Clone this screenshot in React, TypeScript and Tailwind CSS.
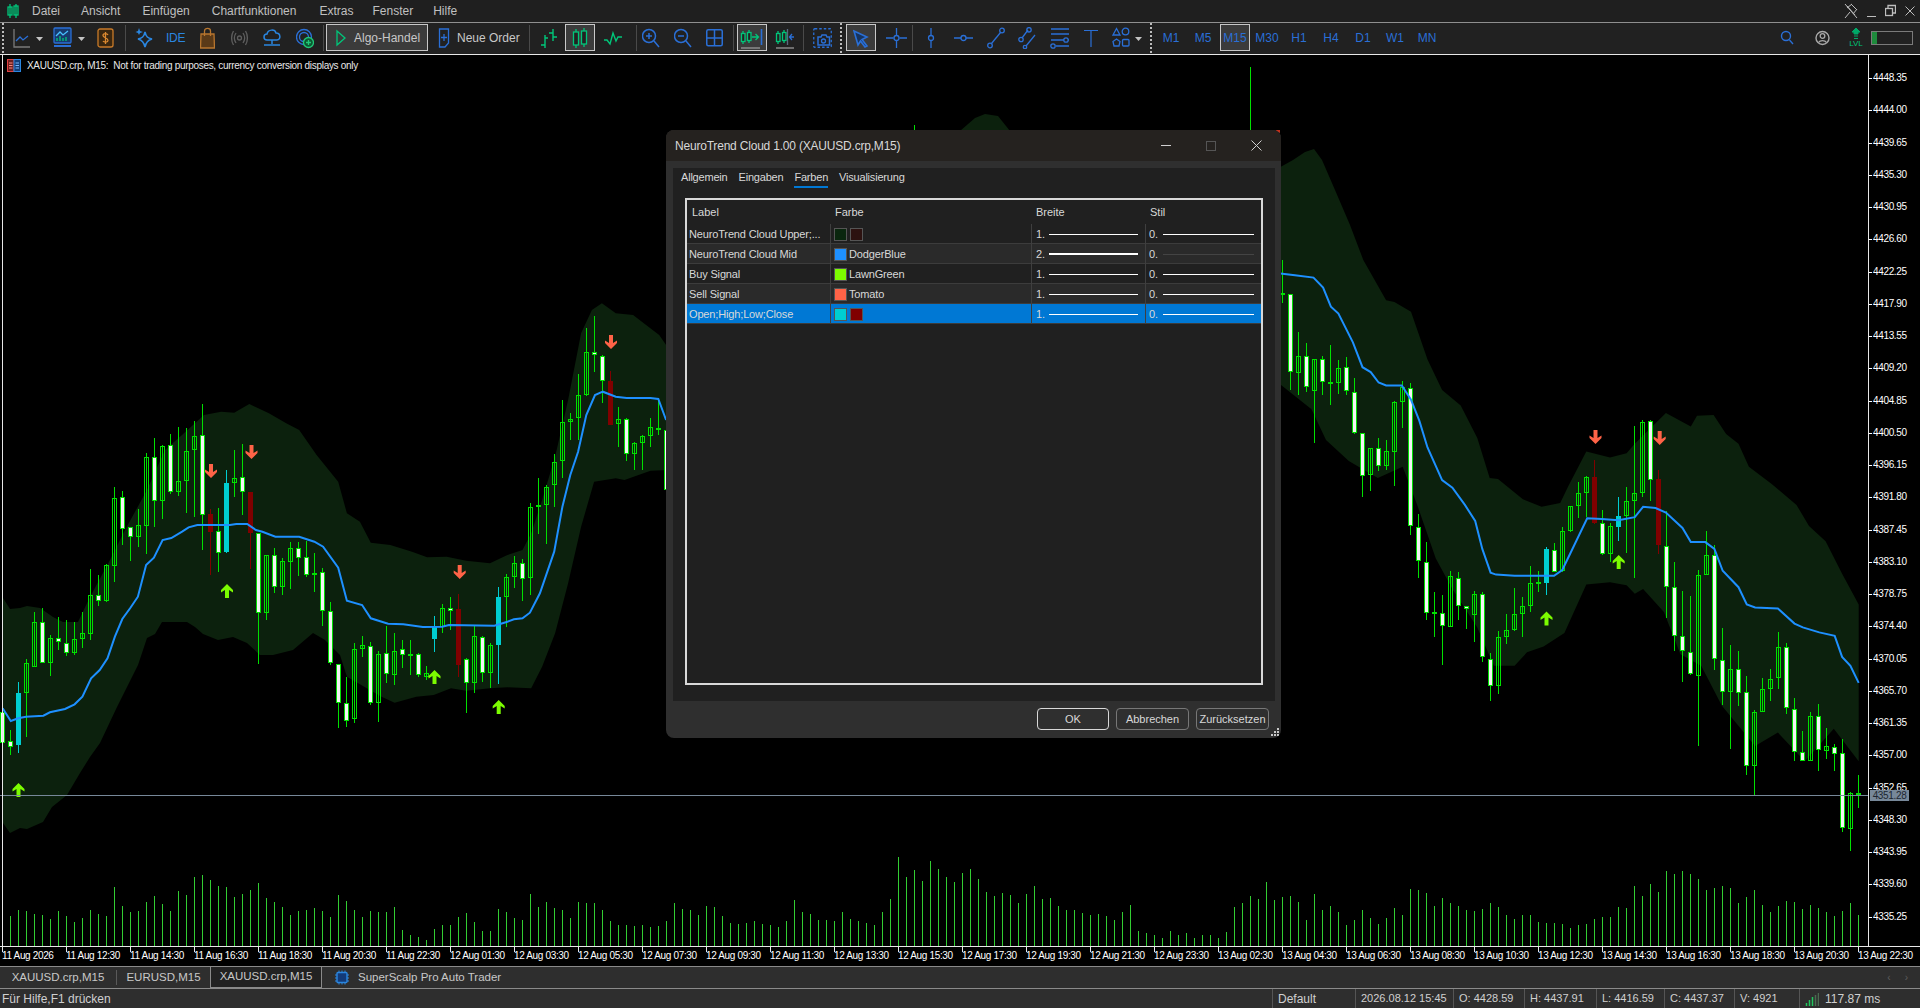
import type { ReactNode } from "react";

type Kind = "w" | "o" | "c" | "r";
type Candle = [number, number, number, number, number, Kind];

// [X, high, bodyTop, bodyBottom, low, kind], read off the left crop
const leftCandles: Candle[] = [
  [6, 1235, 1235, 1330, 1330, "w"], [24, 1290, 1322, 1342, 1365, "w"], [42, 1145, 1180, 1335, 1360, "c"],
  [61, 1078, 1090, 1180, 1310, "o"], [80, 937, 965, 1100, 1100, "o"], [98, 925, 965, 1090, 1090, "w"],
  [116, 1005, 1015, 1090, 1128, "o"], [135, 950, 1015, 1027, 1050, "w"], [153, 960, 1030, 1060, 1068, "w"],
  [172, 965, 1018, 1060, 1065, "o"], [190, 937, 1000, 1018, 1045, "o"], [209, 808, 885, 1003, 1020, "o"],
  [227, 825, 885, 902, 918, "w"], [245, 792, 795, 903, 905, "o"], [264, 560, 595, 797, 845, "o"],
  [282, 573, 590, 688, 735, "w"], [301, 680, 680, 710, 783, "w"], [319, 628, 675, 712, 740, "o"],
  [338, 460, 472, 677, 762, "o"], [356, 415, 472, 602, 680, "w"], [375, 435, 438, 602, 657, "o"],
  [393, 402, 436, 575, 582, "w"], [411, 380, 542, 575, 587, "o"], [430, 385, 452, 542, 640, "o"],
  [448, 362, 408, 450, 650, "o"], [467, 312, 406, 644, 750, "w"], [485, 628, 642, 695, 825, "r"],
  [504, 625, 694, 760, 815, "w"], [522, 510, 550, 755, 760, "c"], [541, 450, 535, 550, 590, "o"],
  [559, 432, 532, 577, 645, "w"], [577, 576, 576, 700, 808, "r"], [596, 700, 700, 940, 1092, "w"],
  [614, 766, 766, 940, 960, "o"], [633, 745, 766, 862, 880, "w"], [651, 775, 784, 862, 885, "o"],
  [670, 725, 745, 785, 868, "o"], [688, 725, 745, 775, 828, "w"], [707, 722, 772, 826, 830, "w"],
  [725, 760, 818, 823, 875, "o"], [743, 805, 817, 932, 977, "w"], [762, 905, 932, 1090, 1095, "w"],
  [780, 1093, 1093, 1210, 1285, "w"], [799, 1132, 1210, 1264, 1282, "w"], [817, 1030, 1048, 1258, 1268, "o"],
  [836, 1008, 1036, 1048, 1070, "o"], [854, 1025, 1037, 1210, 1215, "w"], [873, 1052, 1062, 1210, 1265, "o"],
  [891, 978, 1060, 1122, 1150, "w"], [909, 998, 1054, 1124, 1155, "o"], [928, 1020, 1048, 1064, 1104, "w"],
  [946, 1020, 1062, 1067, 1125, "o"], [965, 1060, 1063, 1125, 1130, "w"], [983, 1098, 1118, 1130, 1140, "o"],
  [1002, 948, 980, 1018, 1055, "c"], [1020, 912, 925, 980, 1000, "o"], [1039, 890, 925, 932, 990, "w"],
  [1057, 882, 928, 1095, 1130, "r"], [1076, 1075, 1078, 1148, 1240, "w"], [1094, 975, 1008, 1148, 1180, "o"],
  [1112, 1008, 1010, 1118, 1145, "w"], [1131, 1028, 1036, 1118, 1165, "o"], [1149, 860, 892, 1036, 1152, "c"],
  [1168, 822, 832, 892, 980, "o"], [1187, 768, 788, 832, 864, "o"], [1205, 778, 788, 838, 902, "w"],
  [1223, 610, 620, 835, 885, "o"], [1242, 535, 616, 620, 702, "o"], [1260, 555, 560, 616, 732, "o"],
  [1278, 462, 485, 556, 620, "o"], [1297, 300, 367, 482, 535, "o"], [1315, 340, 356, 367, 420, "o"],
  [1334, 222, 284, 355, 420, "o"], [1352, 85, 155, 285, 288, "o"], [1371, 48, 155, 166, 216, "w"],
  [1389, 165, 167, 244, 310, "w"], [1408, 212, 244, 375, 375, "r"], [1426, 322, 356, 373, 440, "o"],
  [1445, 355, 356, 462, 483, "w"], [1463, 425, 428, 463, 510, "o"], [1482, 405, 407, 428, 510, "o"],
  [1500, 355, 382, 407, 440, "o"], [1518, 300, 385, 389, 405, "o"], [1536, 390, 390, 570, 570, "w"],
];

// same thing for the right crop, other scale
const rightCandles: Candle[] = [
  [30, 0, 85, 88, 113, "o"], [49, 88, 88, 293, 340, "w"], [69, 187, 252, 294, 352, "o"], [88, 218, 250, 333, 344, "w"],
  [107, 258, 258, 342, 477, "o"], [127, 250, 258, 320, 352, "w"], [146, 222, 320, 323, 378, "o"], [165, 262, 281, 322, 350, "o"],
  [185, 254, 279, 343, 352, "w"], [204, 308, 344, 453, 455, "w"], [223, 453, 453, 565, 618, "w"], [242, 492, 492, 562, 603, "o"],
  [262, 465, 492, 538, 552, "w"], [281, 470, 500, 537, 550, "o"], [300, 368, 372, 502, 590, "o"], [320, 316, 333, 372, 440, "o"],
  [339, 322, 334, 696, 718, "w"], [358, 665, 697, 787, 832, "w"], [378, 738, 788, 923, 940, "w"], [397, 868, 921, 924, 985, "o"],
  [416, 875, 922, 957, 1057, "w"], [435, 813, 827, 958, 960, "o"], [455, 815, 830, 905, 940, "w"], [474, 905, 905, 913, 965, "w"],
  [493, 866, 873, 927, 997, "o"], [513, 868, 872, 1037, 1050, "w"], [532, 1028, 1042, 1114, 1153, "w"], [551, 970, 984, 1114, 1135, "o"],
  [570, 925, 968, 986, 1003, "o"], [590, 858, 924, 968, 970, "o"], [609, 880, 903, 924, 985, "o"], [628, 800, 845, 905, 920, "o"],
  [648, 812, 842, 845, 868, "o"], [667, 750, 756, 843, 875, "c"], [686, 740, 757, 814, 816, "w"], [705, 697, 708, 813, 815, "o"],
  [725, 642, 642, 707, 710, "o"], [744, 580, 610, 642, 675, "o"], [763, 564, 568, 610, 672, "o"], [783, 522, 568, 688, 690, "r"],
  [802, 654, 686, 767, 772, "w"], [821, 688, 695, 767, 790, "o"], [841, 618, 670, 697, 735, "c"], [860, 592, 631, 670, 765, "o"],
  [879, 435, 610, 631, 832, "o"], [899, 418, 422, 610, 618, "o"], [918, 418, 420, 576, 630, "w"], [937, 550, 572, 745, 768, "r"],
  [957, 655, 747, 854, 935, "w"], [976, 790, 854, 983, 1022, "w"], [995, 865, 982, 1022, 1103, "w"], [1014, 878, 1023, 1083, 1085, "w"],
  [1034, 810, 822, 1086, 1270, "o"], [1053, 708, 772, 822, 822, "o"], [1072, 745, 770, 1043, 1072, "w"], [1092, 962, 1045, 1130, 1162, "w"],
  [1111, 1006, 1070, 1130, 1278, "o"], [1130, 1022, 1070, 1132, 1165, "w"], [1150, 1088, 1130, 1323, 1347, "w"], [1169, 1175, 1182, 1322, 1400, "o"],
  [1188, 1092, 1120, 1180, 1182, "o"], [1207, 1070, 1094, 1122, 1152, "o"], [1227, 972, 1010, 1093, 1122, "o"], [1246, 1002, 1010, 1170, 1185, "w"],
  [1265, 1145, 1172, 1285, 1310, "w"], [1285, 1232, 1285, 1308, 1310, "w"], [1304, 1180, 1192, 1308, 1310, "o"], [1323, 1160, 1192, 1280, 1335, "w"],
  [1342, 1222, 1271, 1282, 1305, "o"], [1362, 1265, 1272, 1290, 1335, "w"], [1381, 1252, 1288, 1485, 1495, "w"], [1400, 1390, 1392, 1488, 1545, "o"],
  [1420, 1345, 1392, 1398, 1432, "w"],
];

const volLeft = [183,165,168,177,180,192,168,183,201,189,165,177,183,96,153,171,168,141,123,147,168,108,120,66,60,75,93,96,126,117,105,84,129,141,156,180,168,165,159,168,186,120,138,165,186,168,171,171,156,225,240,246,255,222,210,210,186,174,201,228,228,162,171,189,195,117,156,141,159,165,189,141,144,144,165,198,210,210,212,210,216,213,198,144,162,165,180,153,156,183,204,207,204,198,207,210,216,198,135,171,177,195,195,198,171,192,198,204,210,171,132,6,66,45,78,18,42,66,81];
const volRight = [54,42,72,111,123,114,120,144,117,93,132,129,153,165,165,174,180,177,183,195,171,150,228,234,240,249,228,240,234,249,240,240,249,231,156,144,123,132,81,135,126,123,141,195,117,165,153,171,210,195,165,189,207,189,159,180,102,105,114,153,129,144,153,165,168,162,144,156,180,192,180,180,201,204,204,207,219,210,207,192,186,186,156,159,93,123,87,111,48,57,48,57,72,105,99,93,99,144,126,105,150,171,153,138,141,162,150,159,171,183,168,144,180];

type P = [number, number];
const zl = ([x, y]: P): P => [x / 2.306, 300 + y / 3];
const zr = ([x, y]: P): P => [1270 + x / 2.412, 260 + y / 2.613];
const pts = (list: P[]) => list.map(([x, y]) => `${x.toFixed(1)},${y.toFixed(1)}`).join(" ");

const leftCloudTop: P[] = [[3, 598], [10, 609], [20, 608], [27, 606], [40, 608], [53, 617], [63, 622], [78, 622], [90, 597], [110, 560], [125, 530], [147, 490], [165, 450], [182, 435], [204, 415],
  ...([[510, 335], [540, 338], [575, 312], [620, 340], [660, 370], [690, 390], [730, 465], [780, 545], [800, 640], [830, 665], [855, 728], [900, 735], [950, 755], [985, 772], [1030, 770], [1075, 782], [1130, 790], [1170, 765], [1205, 750], [1225, 700], [1250, 600], [1280, 470], [1310, 300], [1340, 100], [1365, 30], [1388, 10], [1420, 40], [1460, 45], [1490, 75], [1520, 105], [1536, 135], [1540, 140]] as P[]).map(zl)];
const leftCloudBottom: P[] = [[3, 823], [10, 833], [20, 828], [27, 829], [43, 822], [52, 807], [67, 795], [80, 773], [90, 757], [100, 743], [117, 707], [138, 665], [147, 638], [155, 634], [162, 622], [187, 622], [195, 627], [203, 634], [218, 640], [233, 637], [247, 643], [260, 655], [273, 655], [293, 650], [313, 633], [325, 640], [340, 655],
  ...([[800, 1130], [880, 1190], [910, 1208], [960, 1190], [1000, 1185], [1040, 1165], [1075, 1172], [1130, 1165], [1170, 1162], [1225, 1165], [1250, 1100], [1280, 1000], [1310, 850], [1340, 680], [1370, 545], [1420, 535], [1440, 540], [1500, 512], [1540, 510]] as P[]).map(zl)];

const rightCloudTop: P[] = [[1275, 170], [1293, 160], [1305, 152], [1314, 149], [1322, 160], [1335, 190], [1350, 225],
  ...([[225, 0], [280, 105], [300, 110], [340, 135], [380, 260], [415, 340], [460, 380], [500, 465], [530, 570], [550, 572], [610, 625], [655, 645], [700, 635], [720, 590], [763, 500], [820, 516], [860, 505], [880, 480], [955, 400], [1015, 435], [1030, 407], [1070, 405], [1100, 455], [1130, 480], [1155, 540], [1210, 585], [1270, 640], [1300, 695], [1340, 735], [1380, 820], [1420, 900]] as P[]).map(zr)];
const rightCloudBottom: P[] = ([[0, 310], [25, 325], [100, 390], [135, 470], [190, 525], [260, 570], [320, 540], [355, 640], [400, 780], [440, 860], [500, 960], [540, 1060], [590, 1060], [620, 1025], [660, 1010], [710, 975], [763, 848], [820, 842], [860, 850], [880, 872], [900, 860], [950, 920], [990, 1030], [1040, 1060], [1090, 1165], [1170, 1270], [1225, 1235], [1290, 1310], [1360, 1225], [1420, 1310]] as P[]).map(zr);

const blueLeft: P[] = ([[6, 1225], [25, 1263], [42, 1255], [60, 1250], [100, 1247], [115, 1237], [150, 1227], [172, 1213], [190, 1190], [210, 1135], [230, 1110], [248, 1075], [265, 1010], [282, 957], [300, 925], [318, 890], [337, 795], [355, 773], [375, 720], [395, 714], [420, 695], [435, 682], [455, 675], [530, 675], [545, 672], [570, 672], [590, 690], [605, 695], [635, 710], [690, 710], [725, 725], [745, 740], [780, 803], [800, 902], [835, 915], [855, 955], [895, 971], [930, 973], [975, 981], [1020, 980], [1035, 975], [1140, 977], [1170, 965], [1185, 958], [1205, 955], [1222, 938], [1245, 880], [1278, 755], [1297, 620], [1315, 525], [1333, 455], [1352, 345], [1372, 285], [1390, 275], [1420, 290], [1445, 294], [1500, 294], [1518, 297], [1536, 360]] as P[]).map(zl);
const blueRight: P[] = ([[25, 35], [60, 40], [105, 46], [128, 72], [147, 122], [165, 140], [200, 215], [223, 280], [243, 293], [262, 320], [280, 328], [318, 328], [340, 365], [360, 420], [380, 490], [415, 575], [440, 595], [470, 640], [495, 682], [512, 755], [532, 817], [545, 822], [590, 825], [685, 825], [705, 810], [725, 765], [765, 675], [800, 677], [840, 680], [880, 672], [900, 645], [930, 648], [955, 660], [995, 700], [1015, 737], [1050, 737], [1072, 755], [1092, 812], [1130, 855], [1150, 900], [1170, 908], [1225, 911], [1265, 950], [1285, 960], [1325, 973], [1362, 982], [1380, 1037], [1400, 1060], [1420, 1105]] as P[]).map(zr);

const downArrows: P[] = [[211, 471], [251.5, 452], [459.7, 572], [611, 342], [1595.5, 437], [1659.7, 438]];
const upArrows: P[] = [[227, 591], [434.5, 677], [498.7, 707], [18.5, 790], [1546.5, 618.6], [1618.7, 562]];

const CANDLE = "#00e000";

function CandleMark({ cx, hi, top, bot, lo, kind }: { cx: number; hi: number; top: number; bot: number; lo: number; kind: Kind }) {
  const y1 = Math.round(hi);
  const y2 = Math.round(lo);
  const t = Math.round(top);
  const b = Math.max(Math.round(bot), t + 2);
  const solid = kind === "c" ? "#00ced1" : kind === "r" ? "#800000" : null;
  return (
    <g shapeRendering="crispEdges">
      <line x1={cx} x2={cx} y1={y1} y2={y2} stroke={solid ?? CANDLE} />
      {solid ? (
        <rect x={cx - 2.5} y={t} width={5} height={b - t} fill={solid} />
      ) : (
        <rect x={cx - 2} y={t + 0.5} width={4} height={b - t - 1} fill={kind === "w" ? "#f4f4f4" : "none"} stroke={CANDLE} />
      )}
    </g>
  );
}

function ChartDrawing() {
  return (
    <svg className="block shrink-0" width={1868} height={891} viewBox="0 55 1868 891">
      <rect x={0} y={55} width={1868} height={891} fill="#000" />
      <polygon points={pts([...leftCloudTop, ...[...leftCloudBottom].reverse()])} fill="#0c210d" />
      <polygon points={pts([...rightCloudTop, ...[...rightCloudBottom].reverse()])} fill="#0c210d" />
      <polygon points="960,131 975,118 985,114 998,116 1010,131" fill="#0c210d" />
      <line x1={914.5} x2={914.5} y1={125} y2={131} stroke={CANDLE} shapeRendering="crispEdges" />
      <line x1={1250.5} x2={1250.5} y1={67} y2={131} stroke={CANDLE} shapeRendering="crispEdges" />
      <rect x={1276} y={130} width={4} height={3} fill="#c0301c" />

      <g stroke="#32cd32" shapeRendering="crispEdges">
        {volLeft.map((v, i) => (
          <line key={i} x1={10.5 + 8 * i} x2={10.5 + 8 * i} y1={Math.round(855 + v / 3)} y2={946} />
        ))}
        {volRight.map((v, i) => (
          <line key={i} x1={962.5 + 8 * i} x2={962.5 + 8 * i} y1={Math.round(855 + v / 3)} y2={946} />
        ))}
      </g>

      {leftCandles.map(([X, h, t, b, l, k]) => {
        const [x] = zl([X, 0]);
        const cx = Math.round((x - 2.5) / 8) * 8 + 2.5;
        return <CandleMark key={X} cx={cx} hi={300 + h / 3} top={300 + t / 3} bot={300 + b / 3} lo={300 + l / 3} kind={k} />;
      })}
      {rightCandles.map(([X, h, t, b, l, k]) => {
        const [x] = zr([X, 0]);
        const cx = Math.round((x - 2.5) / 8) * 8 + 2.5;
        return <CandleMark key={X} cx={cx} hi={260 + h / 2.613} top={260 + t / 2.613} bot={260 + b / 2.613} lo={260 + l / 2.613} kind={k} />;
      })}

      <polyline points={pts(blueLeft)} fill="none" stroke="#1e90ff" strokeWidth={2} />
      <polyline points={pts(blueRight)} fill="none" stroke="#1e90ff" strokeWidth={2} />

      {upArrows.map(([x, y]) => (
        <path key={x} transform={`translate(${x} ${y})`} d="M0 -7 L6 -1 L6 1.5 L2 -1 L2 7 L-2 7 L-2 -1 L-6 1.5 L-6 -1 Z" fill="#7cfc00" />
      ))}
      {downArrows.map(([x, y]) => (
        <path key={x} transform={`translate(${x} ${y})`} d="M0 7 L6 1 L6 -1.5 L2 1 L2 -7 L-2 -7 L-2 1 L-6 -1.5 L-6 1 Z" fill="#ff6347" />
      ))}

      <line x1={0} x2={1868} y1={795.5} y2={795.5} stroke="#778899" shapeRendering="crispEdges" />
      <rect x={2} y={55} width={1} height={891} fill="#e8e8e8" shapeRendering="crispEdges" />
    </svg>
  );
}

const prices = ["4448.35","4444.00","4439.65","4435.30","4430.95","4426.60","4422.25","4417.90","4413.55","4409.20","4404.85","4400.50","4396.15","4391.80","4387.45","4383.10","4378.75","4374.40","4370.05","4365.70","4361.35","4357.00","4352.65","4348.30","4343.95","4339.60","4335.25"];

const times = ["11 Aug 2026","11 Aug 12:30","11 Aug 14:30","11 Aug 16:30","11 Aug 18:30","11 Aug 20:30","11 Aug 22:30","12 Aug 01:30","12 Aug 03:30","12 Aug 05:30","12 Aug 07:30","12 Aug 09:30","12 Aug 11:30","12 Aug 13:30","12 Aug 15:30","12 Aug 17:30","12 Aug 19:30","12 Aug 21:30","12 Aug 23:30","13 Aug 02:30","13 Aug 04:30","13 Aug 06:30","13 Aug 08:30","13 Aug 10:30","13 Aug 12:30","13 Aug 14:30","13 Aug 16:30","13 Aug 18:30","13 Aug 20:30","13 Aug 22:30"];

function PriceAxis() {
  return (
    <div className="relative w-[52px] shrink-0 border-l border-[#e8e8e8] bg-black pt-[18px] text-[10px] leading-none tracking-[-0.35px] text-white">
      {prices.map((p) => (
        <div key={p} className="flex h-[32.25px] items-start">
          <span className="mt-[5px] h-px w-[3px] bg-white" />
          <span className="ml-[1px]">{p}</span>
        </div>
      ))}
      <div className="absolute left-[1px] top-[735px] flex h-[11px] w-[39px] items-center justify-center bg-[#778899] text-[10px] text-[#1c2630]">4351.28</div>
    </div>
  );
}

function TimeAxis() {
  return (
    <div className="flex h-[20px] shrink-0 items-start border-t border-[#e8e8e8] bg-black pl-[2px] text-[10px] leading-none tracking-[-0.35px] whitespace-nowrap text-white">
      {times.map((t, i) => (
        <div key={i} className="h-[5px] w-[64px] shrink-0 border-l border-[#e8e8e8]">
          <span className="relative top-[4px] -left-px block">{t}</span>
        </div>
      ))}
    </div>
  );
}

/* toolbar icons */
const BLUE = "#2a6fd6";
const GREEN = "#00c67a";

function Ico({ className, w, h = 22, children }: { className: string; w: number; h?: number; children: ReactNode }) {
  return (
    <svg className={`shrink-0 ${className}`} width={w} height={h} viewBox={`0 0 ${w} ${h}`} fill="none" strokeWidth={1.3}>
      {children}
    </svg>
  );
}

const Sep = ({ className }: { className: string }) => <span className={`h-[26px] w-px shrink-0 bg-[#4a4a4a] ${className}`} />;
const Grip = ({ className }: { className: string }) => (
  <span className={`h-[30px] w-[2px] shrink-0 border-l-2 border-dotted border-[#bdbdbd] ${className}`} />
);
const Caret = ({ className }: { className: string }) => (
  <Ico className={className} w={7} h={22}>
    <path d="M0 10 H7 L3.5 14 Z" fill="#c4c4c4" />
  </Ico>
);

function Selected({ className = "", children }: { className?: string; children: ReactNode }) {
  return (
    <div className={`flex h-[27px] w-[30px] shrink-0 items-center justify-center border border-[#c8c8c8] bg-[#3b3b3b] ${className}`}>{children}</div>
  );
}

function PeriodBtn({ label, active }: { label: string; active?: boolean }) {
  return (
    <div className={`flex h-[27px] w-[30px] shrink-0 items-center justify-center text-[12px] text-[#2a6fd6] ${active ? "border border-[#c8c8c8] bg-[#3b3b3b]" : ""}`}>
      {label}
    </div>
  );
}

function Toolbar() {
  return (
    <div className="flex h-[31px] shrink-0 items-center bg-[#212121] pb-[2px]">
      <Grip className="ml-[2px]" />
      <Ico className="ml-[9px]" w={17}>
        <path d="M1 2 V20 H17" stroke="#7a7a7a" />
        <path d="M3 14 L7 10 L10 13 L15 9" stroke={BLUE} />
      </Ico>
      <Caret className="ml-[6px]" />
      <Ico className="ml-[10px]" w={19}>
        <rect x="1" y="1" width="17" height="15" rx="1" stroke={BLUE} fill="#173a6e" />
        <path d="M3 9 L7 5 L10 8 L15 4" stroke="#49c0ff" />
        <path d="M4 14 V11 M7 14 V9 M10 14 V11 M13 14 V10" stroke={GREEN} />
        <path d="M1 19 H18" stroke={BLUE} strokeWidth="2" />
      </Ico>
      <Caret className="ml-[6px]" />
      <Ico className="ml-[12px]" w={17}>
        <rect x="1" y="2" width="15" height="18" rx="2" stroke="#c87a28" fill="#3a2710" />
        <path d="M11 8 C10 6 6 6 6 8.500 C6 11 11 10.500 11 13.500 C11 15.500 7 15.500 6 14 M8.500 5 V17" stroke="#dd8a30" />
      </Ico>
      <Sep className="ml-[11px]" />
      <Ico className="ml-[9px]" w={18}>
        <path d="M10 5 C11 10 13 11 17 12 C13 13 11 15 10 20 C9 15 7 13 3 12 C7 11 9 10 10 5 Z" stroke="#2a86e0" strokeWidth="1.6" />
        <path d="M4 1 L5 4 L8 5 L5 6 L4 8 L3 6 L0.500 5 L3 4 Z" fill="#2a86e0" />
      </Ico>
      <span className="ml-[13px] w-[18px] shrink-0 text-[12px] tracking-[-0.3px] text-[#2a86e0]">IDE</span>
      <Ico className="ml-[16px]" w={15}>
        <path d="M1 7 H14 L14.500 21 H0.500 Z" stroke="#b8762e" fill="#5a3a18" />
        <path d="M4.500 9 V4 C4.500 0.500 10.500 0.500 10.500 4 V9" stroke="#b8762e" />
      </Ico>
      <Ico className="ml-[16px]" w={17}>
        <circle cx="8.500" cy="11" r="2" stroke="#5e5e5e" />
        <path d="M5 6 C3 9 3 13 5 16 M12 6 C14 9 14 13 12 16 M2.500 4 C0 8 0 14 2.500 18 M14.500 4 C17 8 17 14 14.500 18" stroke="#5e5e5e" />
      </Ico>
      <Ico className="ml-[14px]" w={20}>
        <path d="M5 13 C1 13 1 7 5 7 C6 2 13 2 14 6 C19 6 19 13 15 13 Z" stroke="#2a86e0" strokeWidth="1.5" />
        <path d="M10 13 V17 M2 18 H18" stroke="#2a86e0" strokeWidth="1.5" />
      </Ico>
      <Ico className="ml-[14px]" w={18}>
        <circle cx="8" cy="10" r="7.500" stroke={BLUE} />
        <circle cx="8" cy="10" r="4.500" stroke={BLUE} />
        <circle cx="12.500" cy="15.500" r="5" fill="#0b5a32" stroke="#21c878" />
        <path d="M12.500 13 V18 M10 15.500 H15" stroke="#21c878" />
      </Ico>
      <Sep className="ml-[9px]" />
      <div className="ml-[2px] flex h-[27px] w-[102px] shrink-0 items-center border border-[#c8c8c8] bg-[#3b3b3b] text-[#c8c8c8]">
        <Ico className="ml-[8px]" w={12}>
          <path d="M2 4 L10 11 L2 18 Z" stroke={GREEN} />
        </Ico>
        <span className="ml-[7px] text-[12px]">Algo-Handel</span>
      </div>
      <Ico className="ml-[10px]" w={12}>
        <path d="M1.500 2 H10.500 V16 L7 20 H1.500 Z" stroke={BLUE} />
        <path d="M6 7 V14 M3 10.500 H9" stroke={BLUE} />
      </Ico>
      <span className="ml-[7px] w-[62px] shrink-0 text-[12px] whitespace-nowrap text-[#c8c8c8]">Neue Order</span>
      <Sep className="ml-[10px]" />
      <Ico className="ml-[10px]" w={18}>
        <path d="M5 8 V21 M1 18 H5 M5 11 H8 M13 2 V14 M13 6 H9 M13 10 H17" stroke={GREEN} strokeWidth="1.4" />
      </Ico>
      <Selected className="ml-[7px]">
        <Ico className="" w={18}>
          <path d="M5 2 V21 M13 1 V20" stroke={GREEN} />
          <rect x="2.500" y="5" width="5" height="13" fill="#222" stroke={GREEN} />
          <rect x="10.500" y="4" width="5" height="13" fill="#222" stroke={GREEN} />
        </Ico>
      </Selected>
      <Ico className="ml-[9px]" w={18}>
        <path d="M0 13 H3 L6 17 L9 6 L12 14 L14 10 H18" stroke={GREEN} strokeWidth="1.4" />
      </Ico>
      <Sep className="ml-[14px]" />
      <Ico className="ml-[5px]" w={18}>
        <circle cx="7" cy="9" r="6.500" stroke={BLUE} strokeWidth="1.5" />
        <path d="M7 6 V12 M4 9 H10 M12 14 L17 20" stroke={BLUE} strokeWidth="1.5" />
      </Ico>
      <Ico className="ml-[14px]" w={18}>
        <circle cx="7" cy="9" r="6.500" stroke={BLUE} strokeWidth="1.5" />
        <path d="M4 9 H10 M12 14 L17 20" stroke={BLUE} strokeWidth="1.5" />
      </Ico>
      <Ico className="ml-[14px]" w={17}>
        <rect x="0.750" y="2.750" width="15.500" height="16" rx="1.500" stroke={BLUE} strokeWidth="1.5" />
        <path d="M8.500 3 V19 M1 11 H16" stroke={BLUE} strokeWidth="1.5" />
      </Ico>
      <Sep className="ml-[10px]" />
      <Selected className="ml-[3px]">
        <Ico className="" w={24}>
          <path d="M3 4 V17 M9 3 V16" stroke={GREEN} />
          <rect x="1.500" y="6.500" width="3.500" height="8" fill="#222" stroke={GREEN} />
          <rect x="7.500" y="5.500" width="3.500" height="8" fill="#222" stroke={GREEN} />
          <path d="M12 10 H18 M15.500 7 L18.500 10 L15.500 13" stroke={GREEN} />
          <path d="M21.500 2 V18" stroke={BLUE} strokeWidth="1.6" />
          <path d="M1 21 H20" stroke="#9a9a9a" />
        </Ico>
      </Selected>
      <Ico className="ml-[8px]" w={20}>
        <path d="M3 4 V17 M9 3 V16" stroke={GREEN} />
        <rect x="1.500" y="6.500" width="3.500" height="8" fill="#212121" stroke={GREEN} />
        <rect x="7.500" y="5.500" width="3.500" height="8" fill="#212121" stroke={GREEN} />
        <path d="M12.500 2 V18" stroke="#5a6a80" />
        <path d="M19 10 H15 M17 7 L14.500 10 L17 13" stroke={BLUE} />
        <path d="M1 21 H19" stroke="#9a9a9a" />
      </Ico>
      <Sep className="ml-[8px]" />
      <Ico className="ml-[9px]" w={19}>
        <rect x="0.750" y="1.750" width="17.500" height="18.500" rx="1" stroke={BLUE} strokeDasharray="2.500 2" />
        <path d="M5 18 V10 H8 L9 8 H13 L14 10 H16.500 V18 Z" stroke={BLUE} fill="#212121" strokeWidth="1.5" />
        <circle cx="10.500" cy="14" r="2" stroke={BLUE} />
      </Ico>
      <Grip className="ml-[8px]" />
      <Selected className="ml-[4px]">
        <Ico className="" w={16}>
          <path d="M1 4 L14 10 L9 12.500 L14 19 L12 20 L7.500 14 L5 18 Z" stroke={BLUE} fill="#17345f" strokeWidth="1.6" />
        </Ico>
      </Selected>
      <Ico className="ml-[9px]" w={23}>
        <path d="M11.500 1 V8 M11.500 14 V21 M1 11 H8.500 M14.500 11 H22" stroke={BLUE} />
        <circle cx="11.500" cy="11" r="2.500" stroke={BLUE} />
      </Ico>
      <Sep className="ml-[4px]" />
      <Ico className="ml-[14px]" w={8}>
        <path d="M4 1 V8 M4 14 V21" stroke={BLUE} />
        <circle cx="4" cy="11" r="2.500" stroke={BLUE} />
      </Ico>
      <Ico className="ml-[19px]" w={19}>
        <path d="M0 11 H7 M12 11 H19" stroke={BLUE} />
        <circle cx="9.500" cy="11" r="2.500" stroke={BLUE} />
      </Ico>
      <Ico className="ml-[14px]" w={18}>
        <path d="M4.500 16.500 L13.500 5.500" stroke={BLUE} />
        <circle cx="3" cy="18.500" r="2.300" stroke={BLUE} />
        <circle cx="15" cy="3.500" r="2.300" stroke={BLUE} />
      </Ico>
      <Ico className="ml-[13px]" w={20}>
        <path d="M4 11 L10 3 M8 19 L17 8" stroke={BLUE} />
        <circle cx="3" cy="12.500" r="2.200" stroke={BLUE} />
        <circle cx="11" cy="2.800" r="2.200" stroke={BLUE} />
        <circle cx="7" cy="20" r="1.700" stroke={BLUE} />
      </Ico>
      <Ico className="ml-[12px]" w={20}>
        <path d="M1 2 H19 M1 7 H19 M1 13 H19 M6 19 H19" stroke={BLUE} strokeWidth="1.4" />
        <circle cx="16" cy="13" r="2.200" fill="#212121" stroke={BLUE} />
        <circle cx="3" cy="19" r="2.200" stroke={BLUE} />
      </Ico>
      <Ico className="ml-[14px]" w={14}>
        <path d="M0 3.500 H14 M7 3.500 V20" stroke={BLUE} strokeWidth="1.2" />
      </Ico>
      <Ico className="ml-[14px]" w={18}>
        <path d="M4.500 1.500 L8 8 H1 Z" stroke={BLUE} />
        <circle cx="13.500" cy="4.500" r="3.300" stroke={BLUE} />
        <path d="M4.500 12 L8 14.500 L7 19 H2 L1 14.500 Z" stroke={BLUE} />
        <rect x="10.500" y="12.500" width="6.500" height="6.500" rx="1" stroke={BLUE} />
      </Ico>
      <Caret className="ml-[5px]" />
      <Grip className="ml-[8px]" />
      <div className="ml-[4px] flex gap-[2px]">
        {["M1", "M5", "M15", "M30", "H1", "H4", "D1", "W1", "MN"].map((m) => (
          <PeriodBtn key={m} label={m} active={m === "M15"} />
        ))}
      </div>
      <Ico className="ml-auto" w={14}>
        <circle cx="6" cy="9" r="4.500" stroke={BLUE} strokeWidth="1.4" />
        <path d="M9.500 13 L13 17" stroke={BLUE} strokeWidth="1.4" />
      </Ico>
      <Ico className="ml-[21px]" w={15}>
        <circle cx="7.500" cy="11" r="6.500" stroke="#a8a8a8" strokeWidth="1.4" />
        <circle cx="7.500" cy="9" r="2.300" stroke="#a8a8a8" />
        <path d="M3.500 15.500 C5 13 10 13 11.500 15.500" stroke="#a8a8a8" />
      </Ico>
      <div className="ml-[19px] flex w-[14px] shrink-0 flex-col items-center leading-none">
        <Ico className="" w={10} h={13}>
          <path d="M5 1 L9 5 H7 V7 H3 V5 H1 Z M3 9 H7 M3 11.500 H7" stroke="#00a868" fill="#00a868" strokeWidth="1" />
        </Ico>
        <span className="text-[8px] text-[#00c67a]">LVL</span>
      </div>
      <div className="mr-[7px] ml-[8px] h-[14px] w-[42px] shrink-0 border border-[#7a7a7a]">
        <div className="h-full w-[5px] bg-[#1e8a3c]" />
      </div>
    </div>
  );
}

function MenuBar() {
  return (
    <div className="flex h-[22px] shrink-0 items-center bg-[#1f1f1f] text-[12px] text-[#c0c0c0]">
      <Ico className="ml-[7px]" w={12} h={16}>
        <path d="M3 1 V15 M9 1 V15" stroke={GREEN} />
        <rect x="1" y="4" width="4" height="8" stroke={GREEN} />
        <rect x="7" y="3" width="4" height="9" stroke={GREEN} />
      </Ico>
      <span className="ml-[13px]">Datei</span>
      <span className="ml-[21px]">Ansicht</span>
      <span className="ml-[22px]">Einfügen</span>
      <span className="ml-[22px]">Chartfunktionen</span>
      <span className="ml-[23px]">Extras</span>
      <span className="ml-[19px]">Fenster</span>
      <span className="ml-[20px]">Hilfe</span>
      <Ico className="ml-auto" w={14} h={16}>
        <path d="M1 15 L6 9 M3 3 L11 12 M7 1 L13 7 M3 5 L8 1 M9 11 L13 6 M1 1 L13 15" stroke="#bdbdbd" strokeWidth="1" />
      </Ico>
      <span className="ml-[9px] mt-[10px] h-px w-[9px] bg-[#bdbdbd]" />
      <Ico className="ml-[9px]" w={11} h={16}>
        <rect x="0.500" y="5.500" width="7" height="7" stroke="#bdbdbd" fill="#1f1f1f" />
        <path d="M3 5 V2.500 H10.500 V10 H8" stroke="#bdbdbd" />
      </Ico>
      <Ico className="mr-[5px] ml-[9px]" w={10} h={16}>
        <path d="M0.500 3.500 L9.500 12.500 M9.500 3.500 L0.500 12.500" stroke="#bdbdbd" strokeWidth="1" />
      </Ico>
    </div>
  );
}

type Row = { label: string; swatches: string[]; color?: string; width: string; thick?: boolean; dimStyle?: boolean; alt?: boolean; selected?: boolean };

const rows: Row[] = [
  { label: "NeuroTrend Cloud Upper;...", swatches: ["#0a260e", "#2c1210"], width: "1." },
  { label: "NeuroTrend Cloud Mid", swatches: ["#1e90ff"], color: "DodgerBlue", width: "2.", thick: true, dimStyle: true, alt: true },
  { label: "Buy Signal", swatches: ["#7cfc00"], color: "LawnGreen", width: "1." },
  { label: "Sell Signal", swatches: ["#ff6347"], color: "Tomato", width: "1.", alt: true },
  { label: "Open;High;Low;Close", swatches: ["#00ced1", "#800000"], width: "1.", selected: true },
];

const GRID = "grid grid-cols-[143px_201px_114px_117px]";

function TableRow({ row }: { row: Row }) {
  const bg = row.selected ? "bg-[#0078d4]" : row.alt ? "bg-[#2a2a2a]" : "";
  return (
    <div className={`${GRID} h-[20px] border-b border-[#3c3c3c] text-[11px] leading-[20px] tracking-[-0.15px] whitespace-nowrap text-[#d8d8d8] ${bg}`}>
      <div className="pl-[2px]">{row.label}</div>
      <div className="flex items-center gap-[3px] border-l border-[#3f3f3f] pl-[3px]">
        {row.swatches.map((s) => (
          <span key={s} className="h-[13px] w-[13px] border border-[#555555]" style={{ backgroundColor: s }} />
        ))}
        {row.color && <span className="-ml-px">{row.color}</span>}
      </div>
      <div className="flex items-center border-l border-[#3f3f3f] pl-[4px]">
        <span className="w-[13px]">{row.width}</span>
        <span className={`w-[89px] bg-white ${row.thick ? "h-[2px]" : "h-px"}`} />
      </div>
      <div className="flex items-center border-l border-[#3f3f3f] pl-[3px]">
        <span className="w-[14px]">0.</span>
        <span className={`h-px w-[91px] ${row.dimStyle ? "bg-[#444444]" : "bg-white"}`} />
      </div>
    </div>
  );
}

function SettingsDialog() {
  return (
    <div className="absolute top-[130px] left-[666px] flex h-[608px] w-[615px] flex-col overflow-hidden rounded-lg bg-[#2f2f2f] text-[#d8d8d8]">
      <div className="flex h-[31px] shrink-0 items-center bg-[#25221f] pl-[9px] text-[12px] tracking-[-0.2px]">
        <span>NeuroTrend Cloud 1.00 (XAUUSD.crp,M15)</span>
        <span className="ml-auto h-px w-[10px] bg-[#d0d0d0]" />
        <span className="ml-[35px] h-[10px] w-[10px] border border-[#555555]" />
        <svg className="mr-[19px] ml-[35px]" width={11} height={11} viewBox="0 0 11 11">
          <path d="M0.500 0.500 L10.500 10.500 M10.500 0.500 L0.500 10.500" stroke="#d0d0d0" />
        </svg>
      </div>
      <div className="mt-[7px] mr-[6px] ml-[7px] flex h-[533px] flex-col bg-[#202020] px-[12px]">
        <div className="flex h-[30px] shrink-0 gap-[11px] text-[11px] leading-[18px] tracking-[-0.2px]">
          <span className="-ml-[4px]">Allgemein</span>
          <span>Eingaben</span>
          <span className="h-[20px] border-b-2 border-[#0078d4]">Farben</span>
          <span>Visualisierung</span>
        </div>
        <div className="h-[487px] w-[578px] border-2 border-[#d8d8d8]">
          <div className={`${GRID} h-[24px] text-[11px] leading-[24px] text-[#d8d8d8]`}>
            <div className="pl-[5px]">Label</div>
            <div className="pl-[5px]">Farbe</div>
            <div className="pl-[5px]">Breite</div>
            <div className="pl-[5px]">Stil</div>
          </div>
          {rows.map((r) => (
            <TableRow key={r.label} row={r} />
          ))}
        </div>
      </div>
      <div className="flex flex-1 items-start justify-end gap-[7px] pt-[7px] pr-[12px] text-[11px]">
        <button className="h-[22px] w-[72px] rounded-[4px] border border-[#d8d8d8] bg-[#2f2f2f]">OK</button>
        <button className="h-[22px] w-[73px] rounded-[4px] border border-[#777777] bg-[#2f2f2f]">Abbrechen</button>
        <button className="h-[22px] w-[73px] rounded-[4px] border border-[#777777] bg-[#2f2f2f] whitespace-nowrap">Zurücksetzen</button>
      </div>
      <svg className="absolute right-[1px] bottom-[1px]" width={9} height={9} viewBox="0 0 9 9" fill="#c8c8c8">
        <rect x="6" y="0" width="2" height="2" />
        <rect x="3" y="3" width="2" height="2" />
        <rect x="6" y="3" width="2" height="2" />
        <rect x="0" y="6" width="2" height="2" />
        <rect x="3" y="6" width="2" height="2" />
        <rect x="6" y="6" width="2" height="2" />
      </svg>
    </div>
  );
}

function TabBar() {
  return (
    <div className="flex h-[22px] shrink-0 items-stretch border-t border-[#8a8a8a] bg-[#2e2e2e] text-[11.5px] text-[#c8c8c8]">
      <div className="flex w-[116px] items-center justify-center">
        <span>XAUUSD.crp,M15</span>
      </div>
      <div className="my-[3px] w-px bg-[#5a5a5a]" />
      <div className="flex w-[93px] items-center justify-center">EURUSD,M15</div>
      <div className="flex w-[112px] items-center justify-center border-x border-b border-[#8a8a8a] bg-[#222222]">XAUUSD.crp,M15</div>
      <svg className="mt-[3px] ml-[13px]" width={14} height={15} viewBox="0 0 14 15" fill="none">
        <rect x="2" y="2.500" width="10" height="10" rx="1" fill="#123a78" stroke="#2a86e0" strokeWidth="1.4" />
        <path d="M4 0.500 V2 M7 0.500 V2 M10 0.500 V2 M4 13 V14.500 M7 13 V14.500 M10 13 V14.500 M0 5 H2 M0 8 H2 M0 11 H2 M12 5 H14 M12 8 H14 M12 11 H14" stroke="#2a86e0" />
      </svg>
      <span className="ml-[9px] flex items-center">SuperScalp Pro Auto Trader</span>
      <span className="mr-[12px] ml-auto flex items-center gap-[14px] text-[10px] text-[#5e5e5e]">
        <span>‹</span>
        <span>›</span>
      </span>
    </div>
  );
}

function StatusCell({ className, children }: { className: string; children: ReactNode }) {
  return <div className={`flex h-full shrink-0 items-center border-l border-[#555555] pl-[5px] whitespace-nowrap ${className}`}>{children}</div>;
}

function StatusBar() {
  return (
    <div className="flex h-[20px] shrink-0 items-center border-t border-[#8a8a8a] bg-[#2e2e2e] text-[11px] text-[#d0d0d0]">
      <span className="ml-[2px] w-[1270px] shrink-0 text-[12px]">Für Hilfe,F1 drücken</span>
      <StatusCell className="w-[83px] text-[12px]">Default</StatusCell>
      <StatusCell className="w-[98px]">2026.08.12 15:45</StatusCell>
      <StatusCell className="w-[71px]">O: 4428.59</StatusCell>
      <StatusCell className="w-[72px]">H: 4437.91</StatusCell>
      <StatusCell className="w-[68px]">L: 4416.59</StatusCell>
      <StatusCell className="w-[70px]">C: 4437.37</StatusCell>
      <StatusCell className="w-[65px]">V: 4921</StatusCell>
      <StatusCell className="flex-1">
        <svg width={14} height={14} viewBox="0 0 14 14" fill="none">
          <path d="M1.500 14 V11 M4.500 14 V8 M7.500 14 V5" stroke="#22c55e" strokeWidth="1.500" />
          <path d="M10.500 14 V3 M13.500 14 V1" stroke="#4a6a50" strokeWidth="1.500" />
        </svg>
        <span className="ml-[6px] text-[12px]">117.87 ms</span>
      </StatusCell>
    </div>
  );
}

export default function App() {
  return (
    <div className="relative flex h-[1008px] w-[1920px] flex-col overflow-hidden bg-[#202020] font-['Liberation_Sans',Arial,sans-serif]">
      <MenuBar />
      <div className="h-px shrink-0 bg-[#8f8f8f]" />
      <Toolbar />
      <div className="h-px shrink-0 bg-[#e8e8e8]" />
      <div className="relative flex h-[891px] shrink-0 bg-black">
        <ChartDrawing />
        <PriceAxis />
        <div className="absolute top-[4px] left-[7px] flex items-center text-[10px] leading-none tracking-[-0.3px] whitespace-pre text-[#e8e8e8]">
          <svg className="mr-[6px]" width={14} height={13} viewBox="0 0 14 13" fill="none">
            <rect x="0.500" y="0.500" width="6.500" height="12" fill="#6e1f1f" stroke="#e04040" />
            <rect x="7" y="0.500" width="6.500" height="12" fill="#123f7a" stroke="#2a86e0" />
            <path d="M2 4 H5.500 M2 6.500 H5.500 M2 9 H5.500" stroke="#ff8a80" />
            <path d="M8.500 4 H12 M8.500 6.500 H12 M8.500 9 H12" stroke="#7ab8ff" />
          </svg>
          XAUUSD.crp, M15:  Not for trading purposes, currency conversion displays only
        </div>
      </div>
      <TimeAxis />
      <TabBar />
      <StatusBar />
      <SettingsDialog />
    </div>
  );
}
